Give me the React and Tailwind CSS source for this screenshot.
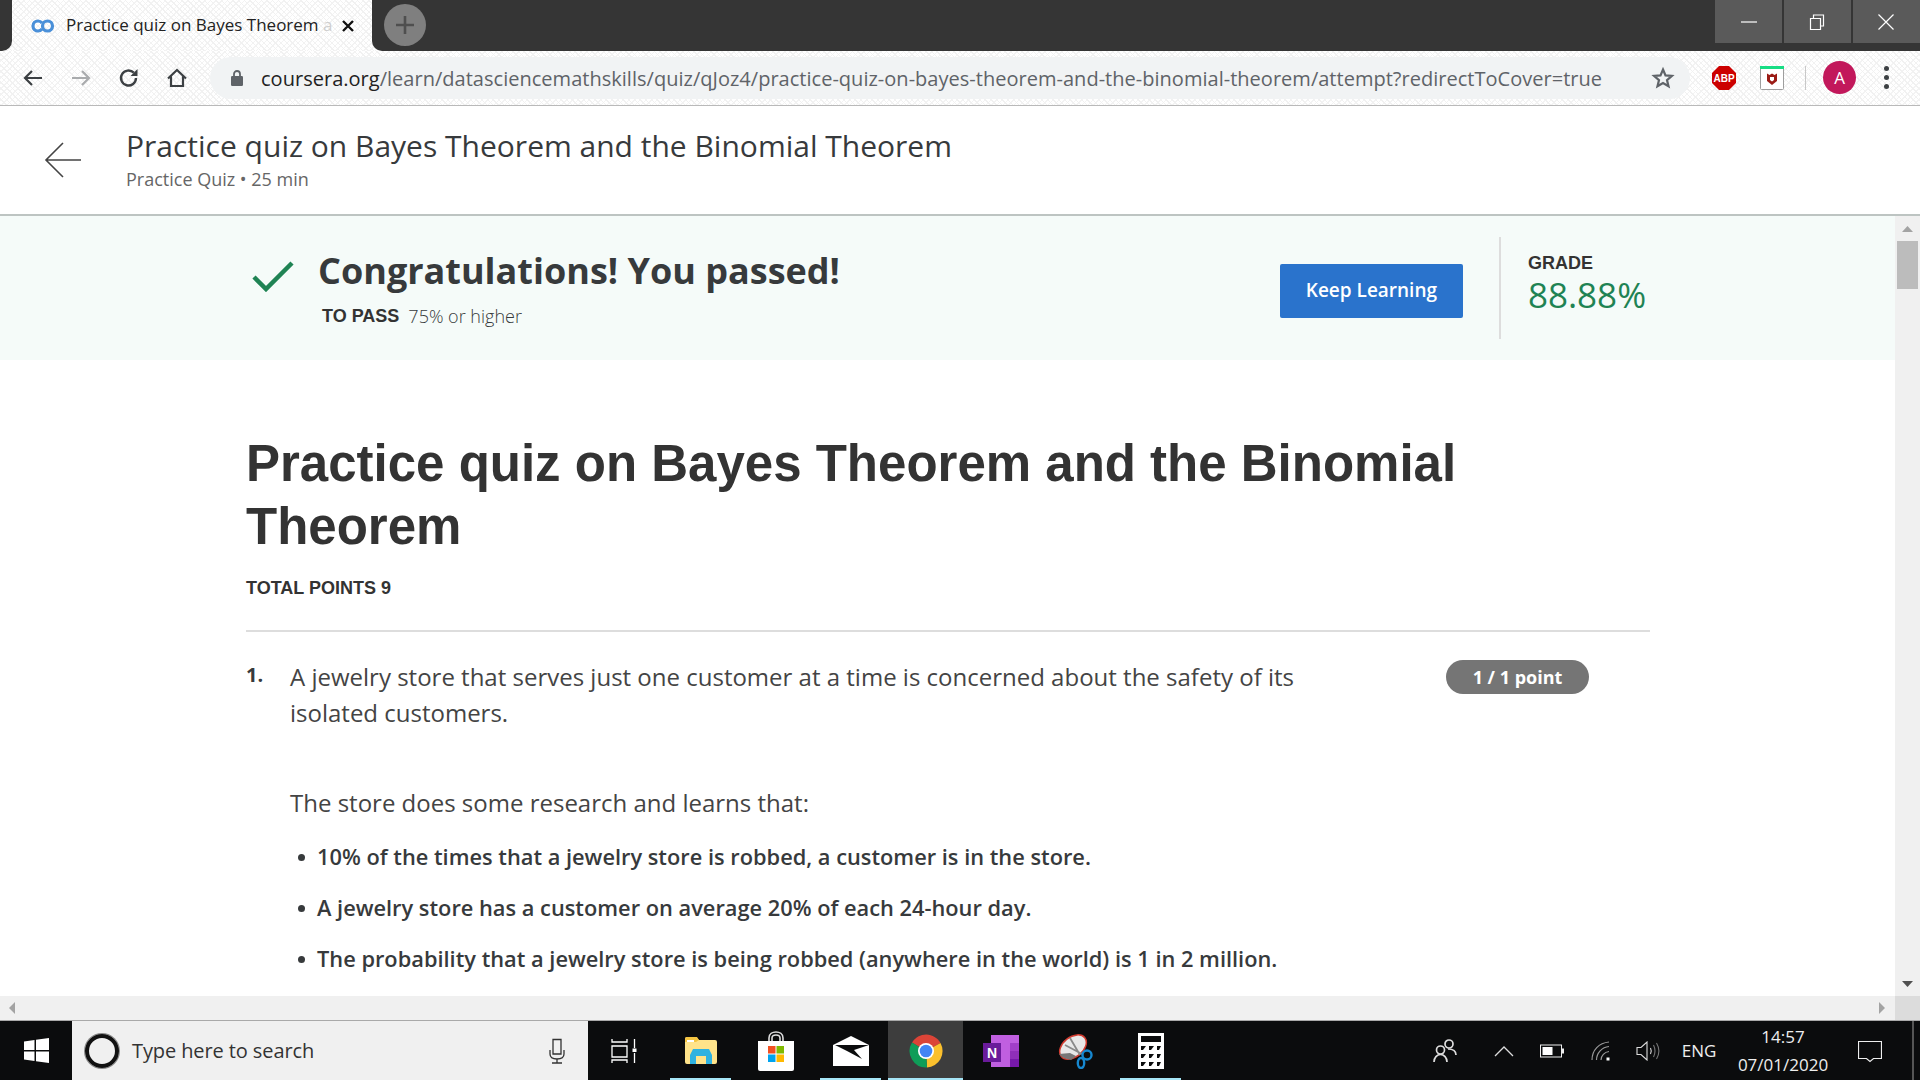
import React from 'react';

const OS = "font-['Open_Sans',sans-serif]";
const AR = "font-['Liberation_Sans',Arial,sans-serif]";
const WEAVE = "bg-[repeating-linear-gradient(45deg,#f1f1f1_0_1px,transparent_1px_4px),repeating-linear-gradient(-45deg,#f3f3f3_0_1px,#ffffff_1px_4px)]";

function Ic({ w = 24, h = 24, vb = '0 0 24 24', children, cls = '' }) {
  return <svg width={w} height={h} viewBox={vb} fill="none" className={cls}>{children}</svg>;
}

function TabStrip() {
  return (
    <div className={`flex h-[51px] shrink-0 bg-[#fafafa] ${WEAVE}`}>
      <div className="w-[12px] h-full bg-[#353535] rounded-br-[10px] shrink-0" />
      <div className="w-[360px] h-full rounded-t-[10px] flex items-center pl-[19px] shrink-0 overflow-hidden">
        <Ic w={24} h={14} vb="0 0 24 14">
          <path d="M11 4C10 2.700 8.500 2 7 2 4.200 2 2 4.200 2 7s2.200 5 5 5c1.500 0 3-.7 4-2" stroke="#4a90d9" strokeWidth="3.200" />
          <circle cx="16.500" cy="7" r="5" stroke="#4a90d9" strokeWidth="3.200" />
        </Ic>
        <span className="ml-[11px] w-[271px] whitespace-nowrap text-[17px] leading-[24px] mb-[2px] text-[#222] font-['Open_Sans',sans-serif]">Practice quiz on Bayes Theorem <span className="text-[#cfcfcf]">a</span></span>
        <Ic w={14} h={14} vb="0 0 14 14" cls="ml-[4px] shrink-0"><path d="M2 2l10 10M12 2L2 12" stroke="#111" strokeWidth="2.400" /></Ic>
      </div>
      <div className="flex-1 h-full bg-[#353535] rounded-bl-[10px] flex">
        <div className="ml-[12px] mt-[4px] w-[42px] h-[42px] rounded-full bg-[#7f7f7f] flex items-center justify-center">
          <Ic w={20} h={20} vb="0 0 20 20"><path d="M10 1v18M1 10h18" stroke="#4f4f4f" strokeWidth="2.600" /></Ic>
        </div>
        <div className="ml-auto flex gap-[2px] h-[43px]">
          <div className="w-[67px] bg-[#5a5a5a] flex items-center justify-center"><Ic w={16} h={16} vb="0 0 16 16"><path d="M0 8h16" stroke="#fff" strokeWidth="1.200" /></Ic></div>
          <div className="w-[67px] bg-[#5a5a5a] flex items-center justify-center"><Ic w={16} h={16} vb="0 0 16 16" cls="mr-[2px]"><path d="M1.500 4.500h10v11h-10zM4.500 4.500v-3.500h10v11h-3" stroke="#fff" strokeWidth="1.200" /></Ic></div>
          <div className="w-[67px] bg-[#5a5a5a] flex items-center justify-center"><Ic w={16} h={16} vb="0 0 16 16" cls="mr-[2px]"><path d="M.5.500l15 15M15.500.500l-15 15" stroke="#fff" strokeWidth="1.200" /></Ic></div>
        </div>
      </div>
    </div>
  );
}

function Toolbar() {
  return (
    <div className={`flex items-center h-[55px] shrink-0 border-b border-[#b9b9b9] bg-[#fafafa] ${WEAVE}`}>
      <div className="w-[210px] shrink-0 flex items-center pl-[21px]">
        <Ic><path d="M21 12H4M11 5l-7 7 7 7" stroke="#3c4043" strokeWidth="2.200" /></Ic>
        <Ic cls="ml-[24px]"><path d="M3 12h17M13 5l7 7-7 7" stroke="#a9abad" strokeWidth="2.200" /></Ic>
        <Ic cls="ml-[24px]"><path d="M19 12a7.500 7.500 0 1 1-2.200-5.300" stroke="#3c4043" strokeWidth="2.400" /><path d="M20.500 3v7h-7z" fill="#3c4043" /></Ic>
        <Ic cls="ml-[24px]"><path d="M3 12.500L12 4l9 8.500M6 10.500V20h12v-9.500" stroke="#3c4043" strokeWidth="2.200" /></Ic>
      </div>
      <div className={`h-[42px] w-[1480px] shrink-0 bg-[#f1f3f4] rounded-full flex items-center pl-[21px] ${OS}`}>
        <Ic w={12} h={18} vb="0 0 12 18"><path d="M3 7V5a3 3 0 0 1 6 0v2" stroke="#5f6368" strokeWidth="1.800" /><rect y="7" width="12" height="10" rx="1.200" fill="#5f6368" /></Ic>
        <span className="ml-[18px] w-[1389px] pt-[1px] text-[20px] tracking-[0.02px] whitespace-nowrap text-[#5f6368]"><span className="text-[#222]">coursera.org</span>/learn/datasciencemathskills/quiz/qJoz4/practice-quiz-on-bayes-theorem-and-the-binomial-theorem/attempt?redirectToCover=true</span>
        <Ic w={24} h={24} cls="ml-[1px] shrink-0"><path d="M12 3.500l2.500 5.900 6.400.5-4.900 4.200 1.500 6.200L12 17l-5.500 3.300L8 14.100 3.100 9.900l6.400-.5z" stroke="#5f6368" strokeWidth="2.200" /></Ic>
      </div>
      <Ic w={26} h={26} vb="0 0 26 26" cls="ml-[21px] shrink-0">
        <path d="M8 1h10l7 7v10l-7 7H8l-7-7V8z" fill="#cc0000" />
        <text x="13" y="17" textAnchor="middle" fill="#fff" fontSize="10" fontWeight="700" fontFamily="Liberation Sans">ABP</text>
      </Ic>
      <Ic w={24} h={24} cls="ml-[23px] shrink-0">
        <rect x=".500" y=".500" width="23" height="23" rx="1" fill="#fff" stroke="#9e9e9e" />
        <rect width="24" height="3" fill="#17dd84" />
        <path d="M7 7.500l2.500 1.500L12 7.500 14.500 9 17 7.500V15l-5 4-5-4z" fill="#9b1c16" />
        <path d="M10 11h4v3l-2 1.500-2-1.500z" fill="#fff" />
      </Ic>
      <div className="ml-[21px] w-px h-[24px] bg-[#c8c8c8] shrink-0" />
      <div className="ml-[17px] mb-[1px] w-[33px] h-[33px] shrink-0 rounded-full bg-[#c2185b] flex items-center justify-center text-white text-[17px] font-['Open_Sans',sans-serif]">A</div>
      <div className="ml-[28px] mb-[1px] flex flex-col gap-[4px] shrink-0">
        <div className="w-[5px] h-[5px] rounded-full bg-[#3c4043]" />
        <div className="w-[5px] h-[5px] rounded-full bg-[#3c4043]" />
        <div className="w-[5px] h-[5px] rounded-full bg-[#3c4043]" />
      </div>
    </div>
  );
}

function PageHeader() {
  return (
    <div className={`flex h-[110px] shrink-0 items-center border-b-2 border-[#bdc4c2] bg-white ${OS}`}>
      <Ic w={38} h={38} vb="0 0 38 38" cls="ml-[44px] shrink-0"><path d="M37 19H2M19 2L2 19l17 17" stroke="#444" strokeWidth="1.600" /></Ic>
      <div className="ml-[44px] mb-[4px] flex flex-col">
        <div className="text-[30px] leading-[40px] text-[#373a3c] font-normal">Practice quiz on Bayes Theorem and the Binomial Theorem</div>
        <div className="mt-[1px] text-[18px] leading-[24px] text-[#666] font-normal">Practice Quiz • 25 min</div>
      </div>
    </div>
  );
}

function Banner() {
  return (
    <div className={`flex h-[144px] shrink-0 items-center bg-[#f5fbf9] ${OS} text-[#373a3c]`}>
      <Ic w={42} h={32} vb="0 0 42 32" cls="ml-[252px] mb-[25px] shrink-0"><path d="M2 17l12 12L40 3" stroke="#1f8354" strokeWidth="4.500" /></Ic>
      <div className="ml-[24px] mb-[3px] flex flex-col">
        <div className="text-[36px] leading-[50px] font-bold">Congratulations! You passed!</div>
        <div className="flex items-center ml-[4px] mt-[8px]">
          <span className={`${AR} font-bold text-[18px] text-[#333] leading-[24px]`}>TO PASS</span>
          <span className="ml-[9px] text-[18px] font-light leading-[24px]">75% or higher</span>
        </div>
      </div>
      <button className="ml-[440px] mt-[5px] w-[183px] h-[54px] rounded-[2px] bg-[#2a73cc] text-white text-[19px] font-semibold shrink-0">Keep Learning</button>
      <div className="ml-[36px] w-[2px] h-[102px] bg-[#dddddd] shrink-0" />
      <div className="ml-[27px] mb-[6px] flex flex-col">
        <div className={`${AR} font-bold text-[18px] leading-[20px] text-[#333]`}>GRADE</div>
        <div className={`text-[35px] leading-[44px] text-[#1f8354] font-normal ${OS}`}>88.88%</div>
      </div>
    </div>
  );
}

function Body() {
  const items = [
    '10% of the times that a jewelry store is robbed, a customer is in the store.',
    'A jewelry store has a customer on average 20% of each 24-hour day.',
    'The probability that a jewelry store is being robbed (anywhere in the world) is 1 in 2 million.',
  ];
  return (
    <div className="flex-1 min-h-0 overflow-hidden bg-white pl-[246px] pt-[72px] text-[#373a3c]">
      <div className="w-[1404px]">
        <h1 className={`${AR} font-bold text-[51px] leading-[63px] text-[#333]`}>Practice quiz on Bayes Theorem and the Binomial Theorem</h1>
        <div className={`${AR} font-bold text-[18px] leading-[24px] mt-[18px] text-[#333]`}>TOTAL POINTS 9</div>
        <div className="h-[2px] bg-[#dddddd] mt-[30px]" />
        <div className={`flex mt-[27px] ${OS}`}>
          <div className="w-[44px] text-[20px] font-bold leading-[36px] mt-[-2px] shrink-0">1.</div>
          <div className="w-[1050px] text-[24px] leading-[36px] font-normal text-[#444] shrink-0">
            <p>A jewelry store that serves just one customer at a time is concerned about the safety of its isolated customers.</p>
            <p className="mt-[54px]">The store does some research and learns that:</p>
          </div>
          <div className="ml-[106px] mt-[1px] w-[143px] h-[34px] rounded-full bg-[#757575] text-white text-[18px] font-bold flex items-center justify-center shrink-0">1 / 1 point</div>
        </div>
        <ul className={`${OS} ml-[44px] mt-[21px] flex flex-col gap-[21px]`}>
          {items.map((t) => (
            <li key={t} className="flex items-center text-[21.8px] leading-[30px] font-semibold">
              <span className="w-[7px] h-[7px] rounded-full bg-[#373a3c] ml-[8px] mr-[12px] shrink-0" />
              {t}
            </li>
          ))}
        </ul>
      </div>
    </div>
  );
}

function VScroll() {
  return (
    <div className="w-[25px] shrink-0 bg-[#f0f0f0] flex flex-col items-center">
      <div className="h-[25px] flex items-center justify-center"><Ic w={11} h={6} vb="0 0 11 6"><path d="M5.500 0l5.500 6H0z" fill="#a3a3a3" /></Ic></div>
      <div className="w-[21px] h-[48px] bg-[#bcbcbc]" />
      <div className="flex-1" />
      <div className="h-[25px] flex items-center justify-center"><Ic w={11} h={6} vb="0 0 11 6"><path d="M5.500 6L0 0h11z" fill="#505050" /></Ic></div>
    </div>
  );
}

function HScroll() {
  return (
    <div className="h-[24px] shrink-0 bg-[#f0f0f0] flex items-center">
      <Ic w={6} h={12} vb="0 0 6 12" cls="ml-[9px]"><path d="M0 6l6-6v12z" fill="#a3a3a3" /></Ic>
      <Ic w={6} h={12} vb="0 0 6 12" cls="ml-[1864px]"><path d="M6 6L0 0v12z" fill="#a3a3a3" /></Ic>
      <div className="ml-[10px] w-[25px] h-full bg-[#dcdcdc]" />
    </div>
  );
}

function TaskBtn({ active, under, children }) {
  return (
    <div className={`relative w-[75px] h-[60px] flex items-center justify-center shrink-0 ${active ? 'bg-[#3d3d3d]' : ''}`}>
      {children}
      {under && <div className={`absolute bottom-0 h-[3px] bg-[#a6e6f7] ${active ? 'left-0 right-0' : 'left-[7px] right-[7px]'}`} />}
    </div>
  );
}

function Taskbar() {
  return (
    <div className={`h-[60px] shrink-0 bg-[#0b0c0d] border-t border-[#a9a9a9] flex items-center text-white ${OS}`}>
      <div className="w-[72px] flex items-center justify-center shrink-0">
        <Ic w={25} h={25} vb="0 0 25 25"><path d="M0 3.500l10.500-1.500v10H0zM12 1.800L25 0v12H12zM0 13.500h10.500V23L0 21.500zM12 13.500h13V25l-13-1.800z" fill="#fff" /></Ic>
      </div>
      <div className="w-[516px] h-[59px] bg-[#f0f0f0] flex items-center shrink-0 pl-[13px]">
        <div className="w-[34px] h-[34px] rounded-full border-[4px] border-[#111] shadow-[0_0_0_1px_#888] shrink-0" />
        <span className="ml-[13px] w-[415px] text-[20px] tracking-[-0.1px] text-[#333] shrink-0">Type here to search</span>
        <Ic w={20} h={26} vb="0 0 20 26" cls="shrink-0"><path d="M6 1.500h8v14.500H6zM3 12v4c0 3.500 3 5 7 5s7-1.500 7-5v-4M10 21v4M5 25h10" stroke="#333" strokeWidth="1.300" /></Ic>
      </div>
      <div className="w-[72px] flex items-center justify-center shrink-0">
        <Ic w={26} h={26} vb="0 0 26 26"><path d="M1 1v3h15V1M1 8h15v11H1zM1 25v-3h15v3M23.500 1v9M23.500 15v10" stroke="#fff" strokeWidth="1.300" /><rect x="21.500" y="10.500" width="4" height="3.500" fill="#fff" /></Ic>
      </div>
      <div className="flex ml-[3px]">
        <TaskBtn under>
          <Ic w={32} h={27} vb="0 0 32 27">
            <path d="M0 2a2 2 0 0 1 2-2h9l3 3h16a2 2 0 0 1 2 2v20a2 2 0 0 1-2 2H2a2 2 0 0 1-2-2z" fill="#ffe38a" />
            <path d="M0 2a2 2 0 0 1 2-2h10l2 3-3 2H0z" fill="#f5c542" />
            <path d="M2 3h7v2H2z" fill="#fff" />
            <path d="M5 27v-9l3-6h16l3 6v9h-6v-8H11v8z" fill="#2fb2e0" />
          </Ic>
        </TaskBtn>
        <TaskBtn>
          <Ic w={36} h={40} vb="0 0 36 40">
            <path d="M11 10V7c0-8 14-8 14 0v3M14 10V7c0-4 8-4 8 0v3" stroke="#ddd" strokeWidth="1.600" />
            <path d="M0 10h36v28a2 2 0 0 1-2 2H2a2 2 0 0 1-2-2z" fill="#fff" />
            <rect x="10" y="15" width="7.500" height="7.500" fill="#f25022" />
            <rect x="18.500" y="15" width="7.500" height="7.500" fill="#7fba00" />
            <rect x="10" y="23.500" width="7.500" height="7.500" fill="#00a4ef" />
            <rect x="18.500" y="23.500" width="7.500" height="7.500" fill="#ffb900" />
          </Ic>
        </TaskBtn>
        <TaskBtn under>
          <Ic w={36} h={30} vb="0 0 36 30">
            <path d="M0 9L18 0l18 9v21H0z" fill="#fff" />
            <path d="M2 9l34 0-15 5 8 9-15-8-12-6z" fill="#0b0c0d" />
          </Ic>
        </TaskBtn>
        <TaskBtn active under>
          <Ic w={34} h={34} vb="0 0 34 34">
            <path d="M17 17L3 8.500A16.500 16.500 0 0 1 31.500 9z" fill="#db4437" />
            <path d="M17 17L31.500 9A16.500 16.500 0 0 1 18 33.500z" fill="#fbc02d" />
            <path d="M17 17l1 16.500A16.500 16.500 0 0 1 3 8.500z" fill="#0f9d58" />
            <circle cx="17" cy="17" r="8" fill="#fff" />
            <circle cx="17" cy="17" r="6.300" fill="#4285f4" />
          </Ic>
        </TaskBtn>
        <TaskBtn>
          <Ic w={36} h={32} vb="0 0 36 32">
            <rect x="8" width="28" height="32" fill="#c05fe0" />
            <rect x="27" y="8" width="9" height="8" fill="#a23fc8" />
            <rect x="27" y="16" width="9" height="8" fill="#8f2fb8" />
            <rect x="27" y="24" width="9" height="8" fill="#7719aa" />
            <rect y="8" width="18" height="19" fill="#6a1b9a" />
            <text x="9" y="23" textAnchor="middle" fill="#fff" fontSize="14" fontWeight="700" fontFamily="Liberation Sans">N</text>
          </Ic>
        </TaskBtn>
        <TaskBtn>
          <Ic w={36} h={36} vb="0 0 36 36">
            <ellipse cx="15" cy="14" rx="15" ry="10" transform="rotate(-38 15 14)" fill="#e8e8e8" stroke="#d23b2f" strokeWidth="1.500" />
            <path d="M1 21c3 4 8 5 12 6l5-4-6-3z" fill="#777" />
            <path d="M12 5l10 17M7 12l17 9" stroke="#8a8a8a" strokeWidth="1.800" />
            <circle cx="29" cy="22" r="4.500" stroke="#1688d0" strokeWidth="2.400" />
            <ellipse cx="23" cy="30" rx="3.200" ry="5" stroke="#1688d0" strokeWidth="2.400" />
          </Ic>
        </TaskBtn>
        <TaskBtn under>
          <Ic w={26} h={36} vb="0 0 26 36">
            <rect width="26" height="36" fill="#fff" />
            <rect x="3" y="3" width="20" height="6" fill="#0b0c0d" />
            <path d="M3 13h5l-3 4H3zM11 13h5l-3 4h-2zM19 13h4l-2 4h-2zM3 21h5l-3 4H3zM11 21h5l-3 4h-2zM19 21h4l-2 4h-2zM3 29h5l-3 4H3zM11 29h5l-3 4h-2zM19 29h4l-2 4h-2z" fill="#0b0c0d" />
          </Ic>
        </TaskBtn>
      </div>
      <div className="ml-[232px] w-[50px] flex justify-center shrink-0">
        <Ic w={24} h={26} vb="0 0 24 26"><circle cx="16" cy="6" r="4" stroke="#ddd" strokeWidth="1.700" /><circle cx="7.500" cy="12" r="4" stroke="#ddd" strokeWidth="1.700" /><path d="M1 24c0-4.500 3-7.500 6.500-7.500S14 19.500 14 24M15 11c4.500 0 8 2 8 6" stroke="#ddd" strokeWidth="1.700" /></Ic>
      </div>
      <div className="w-[68px] flex justify-center shrink-0">
        <Ic w={20} h={12} vb="0 0 20 12"><path d="M1 11l9-9 9 9" stroke="#ddd" strokeWidth="1.300" /></Ic>
      </div>
      <div className="w-[28px] flex justify-center shrink-0">
        <Ic w={24} h={14} vb="0 0 24 14"><rect x=".500" y="1" width="21" height="12" stroke="#eee" /><rect x="2.500" y="3" width="10" height="8" fill="#fff" /><rect x="22" y="4.500" width="2" height="5" fill="#eee" /></Ic>
      </div>
      <div className="w-[70px] flex justify-center shrink-0">
        <Ic w={20} h={20} vb="0 0 20 20"><path d="M1 19C1 9 8 2 18 1M5.500 19C5.500 12 11 6 18 5.500M10 19c0-4 3.500-8 8-8.500" stroke="#9a9a9a" strokeWidth="1.200" /><rect x="15.500" y="16.500" width="3" height="3" fill="#fff" /></Ic>
      </div>
      <div className="w-[24px] flex justify-center shrink-0">
        <Ic w={24} h={20} vb="0 0 24 20"><path d="M1 6.500h4L11 1v18l-6-5.500H1z" stroke="#ddd" strokeWidth="1.100" /><path d="M14.500 7c1 2 1 4 0 6" stroke="#ddd" strokeWidth="1.100" /><path d="M17.500 4c2 4 2 8 0 12M20.500 2c3 5 3 11 0 16" stroke="#777" strokeWidth="1.100" /></Ic>
      </div>
      <div className="w-[78px] text-center text-[17px] text-[#eee] shrink-0">ENG</div>
      <div className="w-[90px] flex flex-col items-center text-[17px] leading-[28px] text-[#eee] shrink-0">
        <span>14:57</span>
        <span>07/01/2020</span>
      </div>
      <div className="w-[84px] flex justify-center shrink-0">
        <Ic w={24} h={24}><path d="M.500 2.500h23v17h-8l-3.500 3-3.500-3h-8z" stroke="#eee" strokeWidth="1.200" /></Ic>
      </div>
      <div className="w-[2px] h-full bg-[#555] shrink-0" />
    </div>
  );
}

export default function App() {
  return (
    <div className="w-[1920px] h-[1080px] flex flex-col overflow-hidden bg-white">
      <TabStrip />
      <Toolbar />
      <PageHeader />
      <div className="flex flex-1 min-h-0">
        <div className="flex-1 min-w-0 flex flex-col">
          <Banner />
          <Body />
        </div>
        <VScroll />
      </div>
      <HScroll />
      <Taskbar />
    </div>
  );
}
